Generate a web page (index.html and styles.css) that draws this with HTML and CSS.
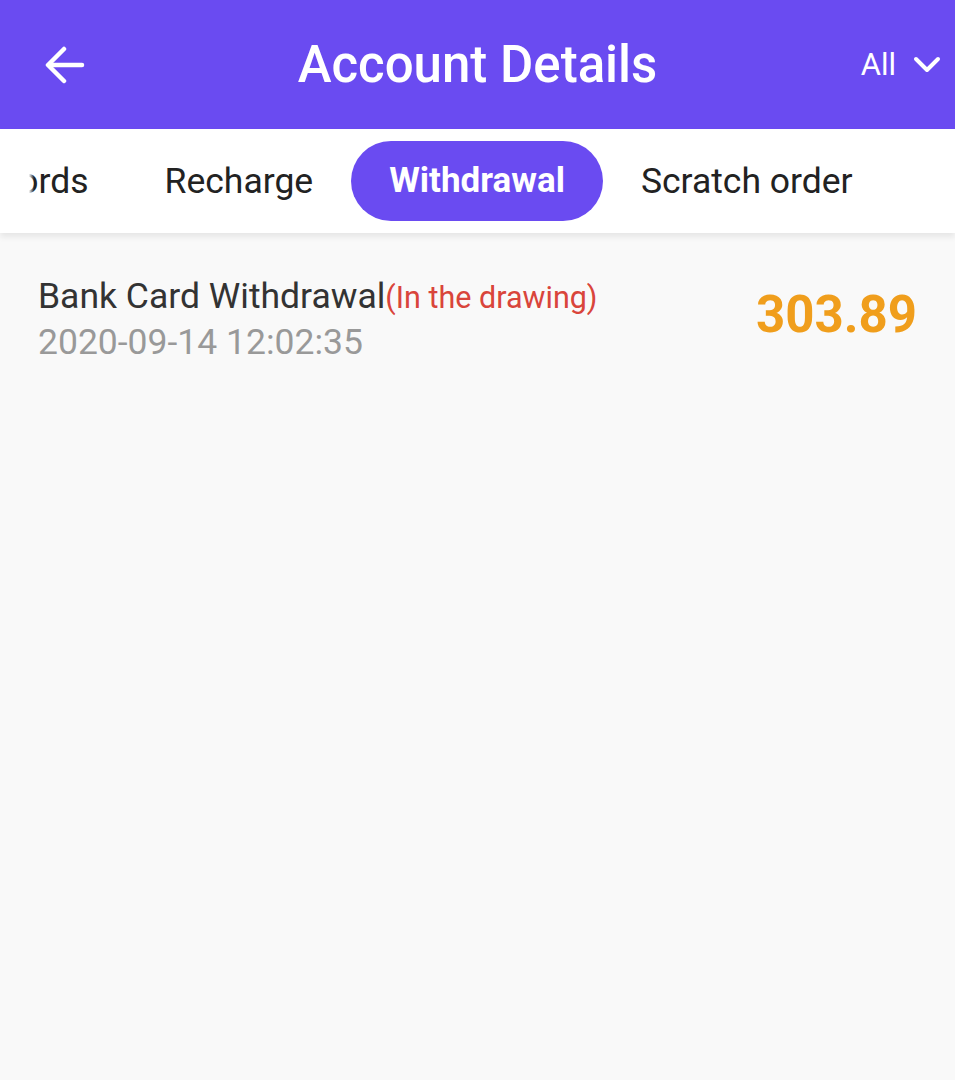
FILE: index.html
```html
<!DOCTYPE html>
<html lang="en">
<head>
  <meta charset="UTF-8" />
  <meta name="viewport" content="width=device-width, initial-scale=1.0"/>
  <title>Account Details</title>
  <link rel="stylesheet" href="styles.css">
</head>
<body>

  <!-- Top bar -->
  <header class="top-bar">
    <button class="back-btn" aria-label="Back">
      <svg width="40" height="40" viewBox="0 0 40 40" fill="none" stroke="#fff" stroke-width="4.5" stroke-linecap="round" stroke-linejoin="round">
        <path d="M37 20H4"/>
        <path d="M19 4L3 20l16 16"/>
      </svg>
    </button>
    <h1 class="title">Account Details</h1>
    <div class="filter">
      <span>All</span>
      <svg width="28" height="18" viewBox="0 0 28 18" fill="none" stroke="#fff" stroke-width="4" stroke-linecap="round" stroke-linejoin="round">
        <path d="M3 3l11 11L25 3"/>
      </svg>
    </div>
  </header>

  <!-- Tabs (scrolled a little to the right) -->
  <nav class="tabs">
    <div class="tab-track">
      <span class="tab first">Records</span>
      <span class="tab">Recharge</span>
      <span class="tab active">Withdrawal</span>
      <span class="tab">Scratch order</span>
    </div>
    <div class="tabs-fade"></div>
  </nav>

  <!-- Records list -->
  <main class="list">
    <div class="item">
      <div class="item-info">
        <div class="item-name">Bank Card Withdrawal<span class="status">(In the drawing)</span></div>
        <div class="item-date">2020-09-14 12:02:35</div>
      </div>
      <div class="amount">303.89</div>
    </div>
  </main>

</body>
</html>
```

FILE: styles.css
```css
/* Page base */
body {
  margin: 0;
  font-family: Roboto, "Noto Sans", Arial, sans-serif;
  background: #f9f9f9;
  min-height: 1080px;
}

/* Purple top bar */
.top-bar {
  height: 129px;
  background: #6a4bf1;
  display: flex;
  align-items: center;
  position: relative;
  color: #fff;
}

.back-btn {
  background: none;
  border: none;
  padding: 0;
  margin-left: 45px;
  width: 40px;
  height: 40px;
  cursor: pointer;
}

.title {
  position: absolute;
  left: 0;
  right: 0;
  margin: 0;
  text-align: center;
  font-size: 51px;
  font-weight: 500;
  pointer-events: none;
}

.filter {
  margin-left: auto;
  margin-right: 14px;
  display: flex;
  align-items: center;
  gap: 17px;
  font-size: 31px;
}

/* Tab strip */
.tabs {
  background: #fff;
  height: 104px;
  overflow: hidden;
  box-shadow: 0 4px 6px rgba(0,0,0,0.08);
  position: relative;
}

.tab-track {
  display: flex;
  align-items: center;
  height: 100%;
  white-space: nowrap;
}

.tab {
  font-size: 35.5px;
  color: #222;
  padding: 0 38px;
  height: 80px;
  line-height: 80px;
  border-radius: 40px;
}

.tab.first {
  margin-left: -79px;
}

.tab.active {
  background: #6a4bf1;
  color: #fff;
  font-size: 35px;
  font-weight: 700;
}

/* white fade over the clipped first tab */
.tabs-fade {
  position: absolute;
  top: 0;
  left: 0;
  width: 34px;
  height: 100%;
  background: linear-gradient(to right, #fff 85%, rgba(255,255,255,0));
}

/* List */
.list {
  padding: 0 38px;
}

.item {
  display: flex;
  align-items: center;
  justify-content: space-between;
  padding-top: 42px;
}

.item-name {
  font-size: 35.5px;
  color: #333;
}

.status {
  font-size: 30.5px;
  color: #d9453b;
}

.item-date {
  font-size: 35.5px;
  color: #999;
  margin-top: 4px;
}

.amount {
  font-size: 51px;
  font-weight: 700;
  color: #f09e1c;
  margin-top: -10px;
}
```
